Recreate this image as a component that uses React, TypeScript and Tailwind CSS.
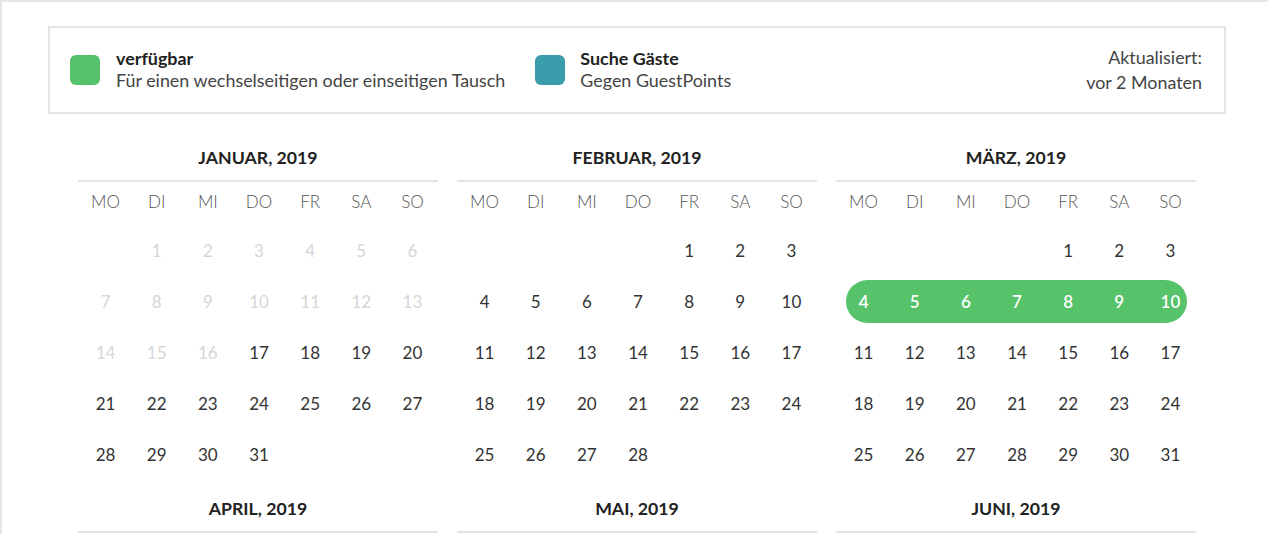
import React from "react";

type Month = {
  name: string;
  offset: number; // 0 = Monday
  days: number;
  pastUntil?: number;
  range?: [number, number];
};

const MONTHS: Month[] = [
  { name: "JANUAR, 2019", offset: 1, days: 31, pastUntil: 16 },
  { name: "FEBRUAR, 2019", offset: 4, days: 28 },
  { name: "MÄRZ, 2019", offset: 4, days: 31, range: [4, 10] },
  { name: "APRIL, 2019", offset: 0, days: 30 },
  { name: "MAI, 2019", offset: 2, days: 31 },
  { name: "JUNI, 2019", offset: 5, days: 30 },
];

const WEEKDAYS = ["MO", "DI", "MI", "DO", "FR", "SA", "SO"];

function DayCell({ day, month }: { day: number | null; month: Month }) {
  if (day === null) return <div className="h-[51px]" />;

  const past = month.pastUntil !== undefined && day <= month.pastUntil;
  const inRange = month.range && day >= month.range[0] && day <= month.range[1];
  const isStart = month.range && day === month.range[0];
  const isEnd = month.range && day === month.range[1];

  if (inRange) {
    return (
      <div className="h-[51px] py-[4px]">
        <div
          className={`flex h-full items-center justify-center bg-[#56c26a] font-semibold text-white ${
            isStart ? "ml-[8px] rounded-l-full pr-[8px]" : ""
          } ${isEnd ? "mr-[9px] rounded-r-full pl-[9px]" : ""}`}
        >
          {day}
        </div>
      </div>
    );
  }

  return (
    <div
      className={`flex h-[51px] items-center justify-center ${
        past ? "text-[#d6d6d6]" : "text-[#333]"
      }`}
    >
      {day}
    </div>
  );
}

function MonthCalendar({ month }: { month: Month }) {
  const cells: (number | null)[] = [];
  for (let i = 0; i < month.offset; i++) cells.push(null);
  for (let d = 1; d <= month.days; d++) cells.push(d);

  return (
    <div>
      <h3 className="border-b-2 border-[#e4e4e4] pb-[10px] text-center text-[17.7px] leading-6 font-bold text-[#222]">
        {month.name}
      </h3>
      <div className="grid grid-cols-7 pl-[2px]">
        {WEEKDAYS.map((w) => (
          <div
            key={w}
            className="flex h-[40px] items-center justify-center text-[17px] font-light text-[#555]"
          >
            {w}
          </div>
        ))}
      </div>
      <div className="mt-[3px] grid grid-cols-7 pl-[2px] text-[17px]">
        {cells.map((d, i) => (
          <DayCell key={i} day={d} month={month} />
        ))}
      </div>
    </div>
  );
}

export default function App() {
  return (
    <div
      className="min-h-screen border-t-2 border-l-2 border-[#e6e6e6] bg-white pt-[24px] pl-[46px] text-[16px]"
      style={{ fontFamily: "Lato, 'Open Sans', sans-serif" }}
    >
      <div className="w-[1178px]">
        <div className="flex h-[88px] items-center border-2 border-[#e4e4e4] pr-[22px] pl-[20px] text-[17.9px]">
          <div className="flex items-center">
            <span className="h-[30px] w-[30px] shrink-0 rounded-[6px] bg-[#56c26a]" />
            <div className="mb-[3px] ml-[16px] leading-[22px]">
              <div className="font-bold text-[#222]">verfügbar</div>
              <div className="text-[#444]">
                Für einen wechselseitigen oder einseitigen Tausch
              </div>
            </div>
          </div>
          <div className="ml-[30px] flex items-center">
            <span className="h-[30px] w-[30px] shrink-0 rounded-[6px] bg-[#3a9dab]" />
            <div className="mb-[3px] ml-[15px] leading-[22px]">
              <div className="font-bold text-[#222]">Suche Gäste</div>
              <div className="text-[#444]">Gegen GuestPoints</div>
            </div>
          </div>
          <div className="ml-auto text-right leading-[25px] text-[#444]">
            <div>Aktualisiert:</div>
            <div>vor 2 Monaten</div>
          </div>
        </div>

        <div className="mt-[32px] grid grid-cols-3 gap-x-[19px] gap-y-[17px] px-[30px]">
          {MONTHS.map((m) => (
            <MonthCalendar key={m.name} month={m} />
          ))}
        </div>
      </div>
    </div>
  );
}
